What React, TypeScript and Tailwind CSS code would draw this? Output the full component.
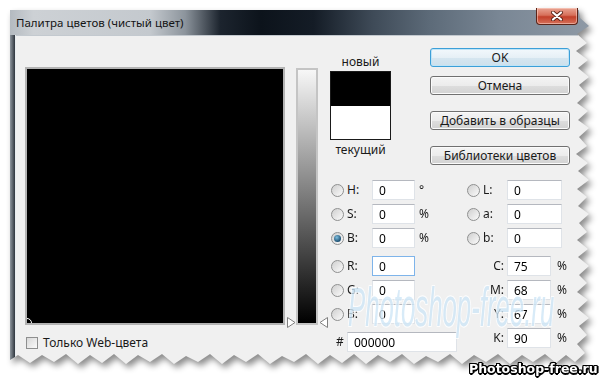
import React from 'react';

type Row = { label: string; value: string; unit?: string; checked?: boolean; focused?: boolean };

const hsb: Row[] = [
  { label: 'H:', value: '0', unit: '°' },
  { label: 'S:', value: '0', unit: '%' },
  { label: 'B:', value: '0', unit: '%', checked: true },
];
const rgb: Row[] = [
  { label: 'R:', value: '0', focused: true },
  { label: 'G:', value: '0' },
  { label: 'B:', value: '0' },
];
const lab: Row[] = [
  { label: 'L:', value: '0' },
  { label: 'a:', value: '0' },
  { label: 'b:', value: '0' },
];
const cmyk: Row[] = [
  { label: 'C:', value: '75' },
  { label: 'M:', value: '68' },
  { label: 'Y:', value: '67' },
  { label: 'K:', value: '90' },
];

const Radio = ({ checked }: { checked?: boolean }) => (
  <span className="flex h-[13px] w-[13px] shrink-0 items-center justify-center rounded-full border border-[#8e8f8f] bg-[linear-gradient(135deg,#cfcfcf,#fbfbfb)]">
    {checked && (
      <span className="h-[7px] w-[7px] rounded-full bg-[radial-gradient(circle_at_40%_35%,#7fc0e0,#1c4f72_70%)]" />
    )}
  </span>
);

const Field = ({ value, focused, className }: { value: string; focused?: boolean; className: string }) => (
  <input
    readOnly
    value={value}
    className={`h-[20px] bg-white pl-[6px] text-[12px] text-black outline-none ${
      focused ? 'border border-[#7eb4ea]' : 'border border-[#dfe3e8] border-t-[#b5b8bf]'
    } ${className}`}
  />
);

const WinButton = ({ label, primary, className }: { label: string; primary?: boolean; className?: string }) => (
  <button
    type="button"
    className={`flex h-[19px] w-[140px] items-center justify-center rounded-[3px] border text-[12px] text-[#1a1a1a] ${
      primary
        ? 'border-[#3c9fd8] bg-[linear-gradient(to_bottom,#f2f8fc_0%,#e6f0f6_50%,#d6e6f0_51%,#cde0ec_100%)] shadow-[inset_0_0_0_1px_#bfe4f7]'
        : 'border-[#707070] bg-[linear-gradient(to_bottom,#f4f4f4_0%,#ececec_50%,#dedede_51%,#d2d2d2_100%)] shadow-[inset_0_0_0_1px_#fbfbfb]'
    } ${className ?? ''}`}
  >
    {label}
  </button>
);

const LeftRow = ({ row }: { row: Row }) => (
  <div className="flex h-[20px] items-center">
    <Radio checked={row.checked} />
    <span className="w-[28px] pl-[3px]">{row.label}</span>
    <Field value={row.value} focused={row.focused} className="w-[43px]" />
    {row.unit && <span className="ml-[4px]">{row.unit}</span>}
  </div>
);

const LabRow = ({ row }: { row: Row }) => (
  <div className="flex h-[20px] items-center">
    <Radio />
    <span className="w-[27px] pl-[3px]">{row.label}</span>
    <Field value={row.value} className="w-[55px]" />
  </div>
);

const CmykRow = ({ row }: { row: Row }) => (
  <div className="flex h-[20px] items-center">
    <span className="w-[40px] pr-[3px] text-right">{row.label}</span>
    <Field value={row.value} className="w-[44px]" />
    <span className="ml-[6px]">%</span>
  </div>
);

export default function App() {
  return (
    <div className="relative h-[381px] w-[600px] overflow-hidden bg-white font-['Noto_Sans',sans-serif] text-[12px] text-[#1a1a1a]">
      <div className="ml-[10px] mt-[10px] w-[584px] [filter:drop-shadow(3px_4px_3px_rgba(0,0,0,0.45))]">
        <div className="flex h-[358px] w-[584px] flex-col [clip-path:polygon(0px_-4px,568px_-4px,570px_8px,579px_16px,567px_24px,577px_33px,566px_41px,578px_50px,568px_58px,579px_67px,569px_75px,577px_84px,567px_93px,578px_101px,568px_110px,579px_118px,569px_127px,577px_136px,566px_144px,578px_153px,568px_161px,579px_170px,567px_179px,577px_187px,568px_196px,579px_204px,569px_213px,577px_222px,567px_230px,578px_239px,568px_247px,579px_256px,569px_265px,577px_273px,567px_282px,578px_290px,568px_299px,579px_308px,569px_316px,577px_325px,567px_334px,575px_343px,565px_352px,556px_345px,546px_353px,535px_344px,523px_352px,512px_345px,500px_354px,488px_344px,476px_352px,464px_345px,452px_354px,440px_344px,428px_352px,416px_346px,404px_354px,392px_344px,380px_352px,368px_345px,356px_354px,344px_344px,332px_353px,320px_345px,308px_354px,296px_344px,284px_352px,272px_346px,260px_354px,248px_344px,236px_352px,224px_345px,212px_354px,200px_344px,188px_352px,176px_346px,164px_354px,152px_344px,140px_352px,128px_345px,116px_354px,104px_344px,92px_353px,80px_345px,68px_354px,56px_344px,44px_352px,32px_345px,20px_353px,8px_345px,0px_350px)]">
          {/* title bar */}
          <div className="flex h-[25px] shrink-0 items-start bg-[linear-gradient(to_right,#b4bac0_0%,#cdd1d5_4%,#c4c9ce_24%,#8c949c_30%,#1c242e_36%,#0c131b_43%,#141c26_52%,#3e4a57_62%,#5d6b79_72%,#7a8795_84%,#8f9aa6_100%)]">
            <span className="ml-[6px] mt-[4px] text-[11.5px] text-[#141414]">Палитра цветов (чистый цвет)</span>
            <span className="-mt-[2px] ml-auto mr-[16px] flex h-[17px] w-[42px] items-center justify-center rounded-b-[4px] border border-t-0 border-[#5b2418] bg-[linear-gradient(to_bottom,#e9a493_0%,#d7705a_45%,#c2402a_55%,#d6715a_100%)] shadow-[inset_0_0_0_1px_rgba(255,220,210,0.5)]">
              <svg width="12" height="10" viewBox="0 0 12 10">
                <path d="M2 1.5 L10 8.5 M10 1.5 L2 8.5" stroke="#5b2418" strokeWidth="4" strokeLinecap="round" />
                <path d="M2 1.5 L10 8.5 M10 1.5 L2 8.5" stroke="#ffffff" strokeWidth="2.2" strokeLinecap="round" />
              </svg>
            </span>
          </div>

          {/* body */}
          <div className="flex flex-1">
            <div className="box-content w-[5px] border-r border-[#e8ecef] bg-[linear-gradient(to_right,#8f979f,#2e353d)]" />
            <div className="flex flex-1 items-start border-t border-[#c3c9cf] bg-[#f0f0f0] pl-[9px]">
              {/* left column */}
              <div className="mt-[31px] flex flex-col">
                <div className="flex items-start">
                  <div className="relative h-[258px] w-[260px] overflow-hidden border-2 border-[#b3b3b3] bg-black">
                    <span className="absolute -bottom-[5px] -left-[5px] h-[10px] w-[10px] rounded-full border border-white" />
                  </div>
                  <div className="relative ml-[11px] mt-[1px] h-[257px] w-[22px] border-2 border-[#c4c4c4] bg-[linear-gradient(to_bottom,#f7f7f7,#000000)]">
                    <svg className="absolute -left-[11px] top-[247px]" width="9" height="11" viewBox="0 0 9 11">
                      <path d="M0.5 0.5 L8 5.5 L0.5 10.5 Z" fill="#fff" stroke="#808080" />
                    </svg>
                    <svg className="absolute -right-[12px] top-[247px]" width="9" height="11" viewBox="0 0 9 11">
                      <path d="M8.5 0.5 L1 5.5 L8.5 10.5 Z" fill="#fff" stroke="#808080" />
                    </svg>
                  </div>
                </div>
                <div className="ml-[1px] mt-[9px] flex items-center">
                  <span className="h-[12px] w-[12px] border border-[#8e8f8f] bg-[linear-gradient(135deg,#d8d8d8,#fafafa)]" />
                  <span className="ml-[5px]">Только Web-цвета</span>
                </div>
              </div>

              {/* right column */}
              <div className="ml-[12px] flex flex-col">
                <div className="flex items-start">
                  <div className="mt-[19px] flex w-[61px] flex-col items-center">
                    <span className="leading-[14px]">новый</span>
                    <div className="mt-[2px] flex h-[69px] w-[61px] flex-col border border-[#1a1a1a]">
                      <div className="h-[34px] bg-black" />
                      <div className="flex-1 bg-white" />
                    </div>
                    <span className="mt-[3px] leading-[14px]">текущий</span>
                  </div>
                  <div className="ml-[39px] mt-[12px] flex flex-col">
                    <WinButton label="OK" primary />
                    <WinButton label="Отмена" className="mt-[9px]" />
                    <WinButton label="Добавить в образцы" className="mt-[16px]" />
                    <WinButton label="Библиотеки цветов" className="mt-[16px]" />
                  </div>
                </div>

                <div className="ml-[1px] mt-[15px] flex">
                  <div className="flex w-[136px] flex-col">
                    <div className="flex flex-col gap-[4px]">
                      {hsb.map((r) => (
                        <LeftRow key={r.label} row={r} />
                      ))}
                    </div>
                    <div className="mt-[8px] flex flex-col gap-[4px]">
                      {rgb.map((r, i) => (
                        <LeftRow key={`rgb-${i}`} row={r} />
                      ))}
                    </div>
                    <div className="mt-[8px] flex h-[20px] items-center">
                      <span className="w-[16px] pl-[5px]">#</span>
                      <Field value="000000" className="w-[110px]" />
                    </div>
                  </div>
                  <div className="flex flex-col">
                    <div className="flex flex-col gap-[4px]">
                      {lab.map((r) => (
                        <LabRow key={r.label} row={r} />
                      ))}
                    </div>
                    <div className="mt-[8px] flex flex-col gap-[4px]">
                      {cmyk.map((r) => (
                        <CmykRow key={r.label} row={r} />
                      ))}
                    </div>
                  </div>
                </div>
              </div>
            </div>
          </div>
        </div>
      </div>

      {/* watermark */}
      <span className="pointer-events-none absolute left-[348px] top-[279px] origin-left scale-x-[0.46] whitespace-nowrap font-['Liberation_Sans',sans-serif] text-[56px] italic leading-none text-[#cfe6f7] opacity-80 [text-shadow:0_0_3px_#fff,1px_1px_0_#fff,-1px_-1px_0_#fff,1px_-1px_0_#fff,-1px_1px_0_#fff]">
        Photoshop-free.ru
      </span>
      <span className="absolute left-[469px] top-[361px] whitespace-nowrap font-['DejaVu_Sans',sans-serif] text-[12.5px] font-bold leading-[16px] text-white [text-shadow:1px_0_0_#000,-1px_0_0_#000,0_1px_0_#000,0_-1px_0_#000,1px_1px_0_#000,-1px_-1px_0_#000,1px_-1px_0_#000,-1px_1px_0_#000,2px_0_0_#000,0_2px_0_#000]">
        Photoshop-free.ru
      </span>
    </div>
  );
}
